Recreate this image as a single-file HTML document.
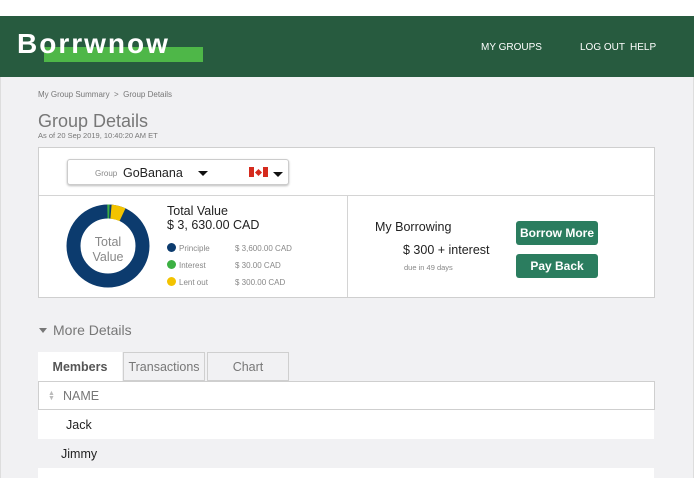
<!DOCTYPE html>
<html><head><style>
*{box-sizing:border-box;margin:0;padding:0}
body{width:695px;height:494px;background:#fff;font-family:"Liberation Sans",Arial,sans-serif;position:relative;overflow:hidden}
.a{position:absolute}
#pg{left:0;top:16px;width:694px;height:462px;background:#f1f1f3;border-left:1px solid #ddd;border-right:1px solid #ddd}
#hd{left:0;top:16px;width:694px;height:61px;background:#275b3f}
.nav{color:#fff;font-size:10px;top:42px}
.card{background:#fff;border:1px solid #cfcfcf}
.btn{background:#2b7d5f;color:#fff;font-weight:bold;font-size:12px;border-radius:3px;text-align:center;line-height:24px;width:82px;height:24px;left:516px}
.lg{font-size:8px;color:#888}
.dot{width:9px;height:9px;border-radius:50%}
.tab{top:352px;height:29px;font-size:12.5px;color:#777;text-align:center;line-height:29px;border:1px solid #cfcfcf;background:#f1f1f3}
</style></head><body>
<div id="pg" class="a"></div>
<div id="hd" class="a"></div>
<div class="a" style="left:44px;top:47px;width:159px;height:15px;background:#4eb748"></div>
<div class="a" style="left:17px;top:28px;color:#fff;font-weight:bold;font-size:28px;letter-spacing:2px">Borrwnow</div>
<div class="a nav" style="left:481px">MY GROUPS</div>
<div class="a nav" style="left:580px">LOG OUT</div>
<div class="a nav" style="left:630px">HELP</div>
<div class="a" style="left:38px;top:90px;font-size:8px;color:#777">My Group Summary &nbsp;&gt;&nbsp; Group Details</div>
<div class="a" style="left:38px;top:111px;font-size:18px;color:#777">Group Details</div>
<div class="a" style="left:38px;top:131px;font-size:7.5px;color:#777">As of 20 Sep 2019, 10:40:20 AM ET</div>
<div class="a card" style="left:38px;top:147px;width:617px;height:151px"></div>
<div class="a" style="left:39px;top:195px;width:615px;height:1px;background:#d4d4d4"></div>
<div class="a" style="left:347px;top:196px;width:1px;height:101px;background:#d4d4d4"></div>
<div class="a" style="left:67px;top:159px;width:222px;height:26px;border:1px solid #ccc;border-radius:3px;box-shadow:0 1px 2px #bbb;background:#fff"></div>
<div class="a" style="left:95px;top:169px;font-size:8px;color:#888">Group</div>
<div class="a" style="left:123px;top:166px;font-size:12.5px;color:#222">GoBanana</div>
<div class="a" style="left:198px;top:171px;border:5px solid transparent;border-top:5px solid #111;border-bottom:0"></div>
<div class="a" style="left:249px;top:167px;width:19px;height:10px;background:#d52b1e"></div>
<div class="a" style="left:254px;top:167px;width:9px;height:10px;background:#fff"></div>
<div class="a" style="left:256px;top:170px;width:5px;height:5px;background:#d52b1e;transform:rotate(45deg)"></div>
<div class="a" style="left:273px;top:172px;border:5px solid transparent;border-top:5px solid #111;border-bottom:0"></div>
<svg class="a" style="left:66px;top:204px" width="84" height="84" viewBox="0 0 84 84">
<circle cx="42" cy="42" r="34.5" fill="none" stroke="#0c3b6e" stroke-width="14"/>
<circle cx="42" cy="42" r="34.5" fill="none" stroke="#f3c300" stroke-width="14" stroke-dasharray="12 205" transform="rotate(-85 42 42)"/>
<circle cx="42" cy="42" r="34.5" fill="none" stroke="#3cb043" stroke-width="14" stroke-dasharray="2 215" transform="rotate(-91 42 42)"/>
</svg>
<div class="a" style="left:84px;top:235px;width:48px;text-align:center;font-size:12.5px;line-height:14.5px;color:#888">Total Value</div>
<div class="a" style="left:167px;top:204px;font-size:12.5px;color:#222">Total Value</div>
<div class="a" style="left:167px;top:218px;font-size:12.5px;color:#222">$ 3, 630.00 CAD</div>
<div class="a dot" style="left:167px;top:243px;background:#0c3b6e"></div>
<div class="a dot" style="left:167px;top:260px;background:#3cb043"></div>
<div class="a dot" style="left:167px;top:277px;background:#f3c300"></div>
<div class="a lg" style="left:179px;top:244px">Principle</div>
<div class="a lg" style="left:179px;top:261px">Interest</div>
<div class="a lg" style="left:179px;top:278px">Lent out</div>
<div class="a lg" style="left:235px;top:244px">$ 3,600.00 CAD</div>
<div class="a lg" style="left:235px;top:261px">$ 30.00 CAD</div>
<div class="a lg" style="left:235px;top:278px">$ 300.00 CAD</div>
<div class="a" style="left:375px;top:220px;font-size:12.5px;color:#222">My Borrowing</div>
<div class="a" style="left:403px;top:243px;font-size:12.5px;color:#222">$ 300 + interest</div>
<div class="a" style="left:404px;top:263px;font-size:7.5px;color:#888">due in 49 days</div>
<div class="a btn" style="top:221px">Borrow More</div>
<div class="a btn" style="top:254px">Pay Back</div>
<div class="a" style="left:39px;top:328px;border:4px solid transparent;border-top:5px solid #777;border-bottom:0"></div>
<div class="a" style="left:53px;top:322px;font-size:14px;color:#777">More Details</div>
<div class="a tab" style="left:38px;width:84px;background:#fff;border-color:#fff;font-weight:bold;color:#555">Members</div>
<div class="a tab" style="left:123px;width:82px">Transactions</div>
<div class="a tab" style="left:207px;width:82px">Chart</div>
<div class="a" style="left:38px;top:381px;width:617px;height:29px;background:#fff;border:1px solid #cfcfcf"></div>
<div class="a" style="left:48px;top:391px;font-size:7px;color:#bbb;line-height:5px">▲<br>▼</div>
<div class="a" style="left:63px;top:389px;font-size:12.5px;color:#777">NAME</div>
<div class="a" style="left:38px;top:410px;width:616px;height:29px;background:#fff"></div>
<div class="a" style="left:66px;top:418px;font-size:12.5px;color:#222">Jack</div>
<div class="a" style="left:61px;top:447px;font-size:12.5px;color:#222">Jimmy</div>
<div class="a" style="left:38px;top:468px;width:616px;height:10px;background:#fff"></div>
</body></html>
